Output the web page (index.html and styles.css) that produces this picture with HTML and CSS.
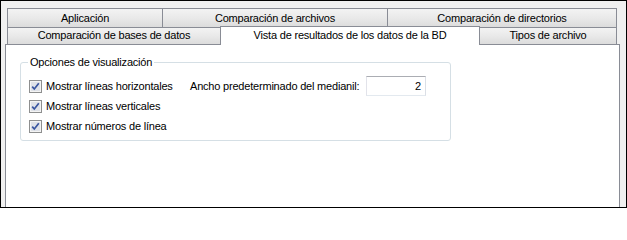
FILE: index.html
```html
<!DOCTYPE html>
<html lang="es">
<head>
<meta charset="utf-8">
<link rel="stylesheet" href="styles.css">
</head>
<body>
<div class="window">
  <div class="tabs">
    <div class="row row1">
      <div class="tab t-apl">Aplicación</div>
      <div class="tab t-arch">Comparación de archivos</div>
      <div class="tab t-dir last">Comparación de directorios</div>
    </div>
    <div class="row row2">
      <div class="tab t-bd">Comparación de bases de datos</div>
      <div class="tab t-vista selected">Vista de resultados de los datos de la BD</div>
      <div class="tab t-tipos last">Tipos de archivo</div>
    </div>
  </div>
  <div class="panel">
    <fieldset class="group">
      <legend>Opciones de visualización</legend>
      <div class="group-body">
        <div class="checks">
          <div class="check"><span class="box"><svg width="13" height="13" viewBox="0 0 13 13"><rect x="0.5" y="0.5" width="12" height="12" fill="#f4f4f4" stroke="#8e8f8f"/><rect x="2" y="2" width="9" height="9" fill="#dfe2e8"/><path d="M3.2 6.6 L5.3 9 L9.8 3.2" fill="none" stroke="#3a56a0" stroke-width="1.7"/></svg></span>Mostrar líneas horizontales</div>
          <div class="check"><span class="box"><svg width="13" height="13" viewBox="0 0 13 13"><rect x="0.5" y="0.5" width="12" height="12" fill="#f4f4f4" stroke="#8e8f8f"/><rect x="2" y="2" width="9" height="9" fill="#dfe2e8"/><path d="M3.2 6.6 L5.3 9 L9.8 3.2" fill="none" stroke="#3a56a0" stroke-width="1.7"/></svg></span>Mostrar líneas verticales</div>
          <div class="check"><span class="box"><svg width="13" height="13" viewBox="0 0 13 13"><rect x="0.5" y="0.5" width="12" height="12" fill="#f4f4f4" stroke="#8e8f8f"/><rect x="2" y="2" width="9" height="9" fill="#dfe2e8"/><path d="M3.2 6.6 L5.3 9 L9.8 3.2" fill="none" stroke="#3a56a0" stroke-width="1.7"/></svg></span>Mostrar números de línea</div>
        </div>
        <div class="field">
          <span class="field-label">Ancho predeterminado del medianil:</span>
          <span class="input">2</span>
        </div>
      </div>
    </fieldset>
  </div>
</div>
</body>
</html>
```
FILE: styles.css
```css
* { box-sizing: border-box; }
html, body { margin: 0; padding: 0; }
body {
  font-family: "Liberation Sans", Arial, sans-serif;
  font-size: 11px;
  letter-spacing: -0.2px;
  color: #000;
  background: #fff;
}
.window {
  width: 627px;
  height: 208px;
  border: 1px solid #000;
  background: #f0f0f0;
  padding: 7px 0 0 4px;
  overflow: hidden;
}
.tabs { margin-left: 2px; }
.row { display: flex; }
.tab {
  border: 1px solid #898c95;
  border-bottom: none;
  border-right: none;
  background: linear-gradient(#f3f3f3, #e9e9e9 50%, #dcdcdc);
  text-align: center;
  white-space: nowrap;
}
.tab.last { border-right: 1px solid #898c95; }
.row1 .tab { height: 19px; line-height: 18px; }
.row2 .tab { height: 17px; line-height: 15px; }
.t-apl { width: 155px; }
.t-arch { width: 225px; }
.t-dir { width: 230px; }
.t-bd { width: 213px; }
.t-vista { width: 260px; }
.t-tipos { width: 137px; }
.tab.selected {
  background: #fff;
  border-right: 1px solid #898c95;
  height: 19px;
  margin-top: -1px;
  margin-bottom: -1px;
  position: relative;
  z-index: 1;
  line-height: 16px;
}
.tab.selected + .tab { border-left: none; }
.panel {
  width: 615px;
  height: 180px;
  border: 1px solid #898c95;
  background: #fff;
  padding: 10px 0 0 14px;
}
.group {
  width: 431px;
  height: 86px;
  margin: 0;
  border: 1px solid #d5dfe5;
  border-radius: 3px;
  padding: 7px 0 0 8px;
}
.group legend {
  padding: 0 2px;
  margin-left: -1px;
  line-height: 14px;
}
.group-body { display: flex; }
.checks { width: 161px; }
.check {
  height: 20px;
  display: flex;
  align-items: center;
  white-space: nowrap;
}
.box { width: 13px; height: 13px; margin-right: 4px; display: block; }
.box svg { display: block; }
.field { display: flex; align-items: center; height: 20px; }
.field-label { width: 176px; white-space: nowrap; }
.input {
  width: 60px;
  height: 20px;
  border: 1px solid #abadb3;
  border-color: #abadb3 #dbdfe6 #e3e9ef #e2e3ea;
  background: #fff;
  text-align: right;
  padding-right: 4px;
  line-height: 18px;
}
```
